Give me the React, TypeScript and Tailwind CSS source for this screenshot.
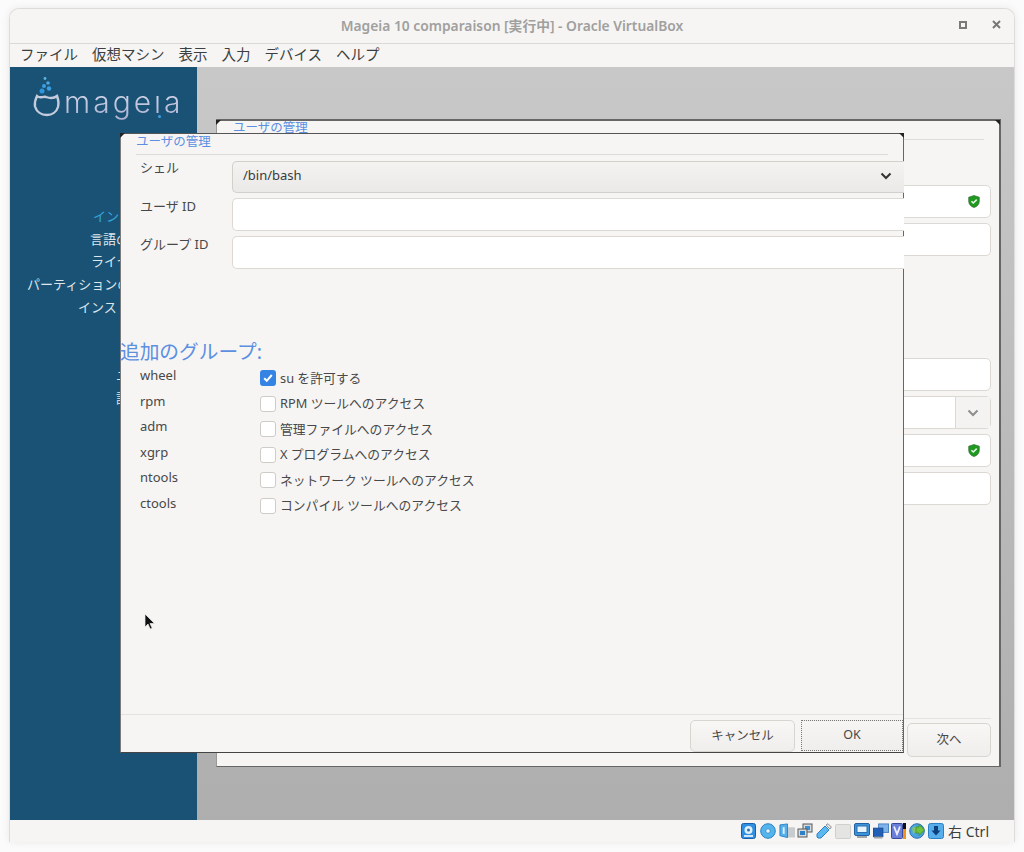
const jp = "font-['Noto_Sans','Noto_Sans_CJK_JP',sans-serif]";

const sideItems = [
  { text: 'インストール', cls: 'ml-[83px] text-[#35a6dc]' },
  { text: '言語の選択', cls: 'ml-[80px] text-[#dfe6ea]' },
  { text: 'ライセンス', cls: 'ml-[81px] text-[#dfe6ea]' },
  { text: 'パーティションの設定', cls: 'ml-[17px] text-[#dfe6ea]' },
  { text: 'インストール', cls: 'ml-[68px] text-[#dfe6ea]' },
  { text: '\u00a0', cls: '' },
  { text: '\u00a0', cls: '' },
  { text: 'ユーザ', cls: 'ml-[106px] text-[#dfe6ea]' },
  { text: '設定', cls: 'ml-[106px] text-[#dfe6ea]' },
];

const groups = [
  { name: 'wheel', label: 'su を許可する', checked: true },
  { name: 'rpm', label: 'RPM ツールへのアクセス' },
  { name: 'adm', label: '管理ファイルへのアクセス' },
  { name: 'xgrp', label: 'X プログラムへのアクセス' },
  { name: 'ntools', label: 'ネットワーク ツールへのアクセス' },
  { name: 'ctools', label: 'コンパイル ツールへのアクセス' },
];

function Shield() {
  return (
    <svg width="12" height="13" viewBox="0 0 12 13">
      <path d="M6 .5 11.300 2.200V6.400C11.300 9.400 9 11.600 6 12.600 3 11.600.7 9.400.7 6.400V2.200Z" fill="#1f9a1f" stroke="#2f5f2f" strokeWidth=".6" />
      <path d="M3.400 6.200 5.300 8 8.700 4.600" fill="none" stroke="#e8f8e8" strokeWidth="1.500" />
    </svg>
  );
}

function Chevron({ color }: { color: string }) {
  return (
    <svg width="12" height="8" viewBox="0 0 12 8">
      <path d="M1.500 1.500 6 6l4.500-4.500" fill="none" stroke={color} strokeWidth="2" />
    </svg>
  );
}

function Corner({ side }: { side: 'left' | 'right' }) {
  if (side === 'left') return <div className="absolute left-[-1px] top-[-1px] h-[5px] w-[5px] bg-[#222] [clip-path:polygon(0_0,100%_0,0_100%)]" />;
  return <div className="absolute right-[-1px] top-[-1px] h-[5px] w-[5px] bg-[#222] [clip-path:polygon(0_0,100%_0,100%_100%)]" />;
}

function Field({ children, className }: { children?: React.ReactNode; className?: string }) {
  return (
    <div className={`flex h-[33px] items-center justify-end rounded-[5px] border border-[#dcd8d4] bg-white pr-[10px] ${className ?? ''}`}>
      {children}
    </div>
  );
}

// Oracle VirtualBox status bar icons
function StatusIcons() {
  return (
    <div className="flex items-center gap-[2.800px]">
      <svg width="16" height="16" viewBox="0 0 16 16">
        <rect x=".5" y=".5" width="14" height="15" rx="2" fill="#2f8fe0" stroke="#1c5fa8" />
        <circle cx="7.500" cy="7" r="4" fill="#dff0fb" />
        <circle cx="7.500" cy="7" r="1.500" fill="#2f6fb0" />
        <rect x="3" y="12" width="9" height="2" fill="#cfe6f8" />
      </svg>
      <svg width="16" height="16" viewBox="0 0 16 16">
        <circle cx="8" cy="8" r="7.300" fill="#55b4ec" stroke="#2c80c4" />
        <circle cx="8" cy="8" r="2.200" fill="#e8f6fe" stroke="#2c80c4" strokeWidth=".7" />
      </svg>
      <svg width="16" height="16" viewBox="0 0 17 16">
        <rect x="9" y="4" width="8" height="11" rx="1" fill="#c9ccce" />
        <path d="M1 1.500 9 .5V15L1 13Z" fill="#56b0ea" stroke="#2c80c4" />
        <rect x="4" y="4" width="2" height="7" fill="#dff0fb" />
      </svg>
      <svg width="16" height="16" viewBox="0 0 16 16">
        <rect x="6" y="1" width="9" height="8" fill="#d7dadc" stroke="#55595c" />
        <rect x="8" y="3" width="5" height="4" fill="#3e8fd4" />
        <rect x="1" y="6" width="9" height="8" fill="#d7dadc" stroke="#55595c" />
        <rect x="3" y="8" width="5" height="4" fill="#2f7fc8" />
      </svg>
      <svg width="16" height="16" viewBox="0 0 16 16">
        <path d="M1 11 9 3l4 4-8 8H2L1 14Z" fill="#5cb8f0" stroke="#2c80c4" />
        <path d="M10 2l2-1.300L15.300 4 14 6Z" fill="#e5e8ea" stroke="#8a9094" />
      </svg>
      <svg width="16" height="16" viewBox="0 0 16 16">
        <rect x=".5" y="1.500" width="15" height="14" rx="1" fill="#e4e4e2" stroke="#cfcfcc" />
      </svg>
      <svg width="16" height="16" viewBox="0 0 16 16">
        <rect x=".5" y=".5" width="15" height="12" rx="1.500" fill="#3c93da" stroke="#24609f" />
        <rect x="3" y="3" width="10" height="6.500" fill="#e5f3fc" stroke="#2a6fb0" />
        <rect x="3" y="13" width="10" height="2" fill="#9fa6aa" />
      </svg>
      <svg width="16" height="16" viewBox="0 0 17 16">
        <rect x="6" y=".5" width="10.500" height="9" fill="#7fb4ea" stroke="#4a80c0" />
        <rect x=".5" y="5" width="10" height="9" fill="#1f5fb8" stroke="#1a4a90" />
        <rect x="1" y="14" width="9" height="2" fill="#9fa6aa" />
      </svg>
      <div className="flex">
        <svg width="12" height="16" viewBox="0 0 12 16">
          <rect x=".5" y=".5" width="11" height="15" rx="1" fill="#6a7fd8" stroke="#3a4a9a" />
          <path d="M3 3.500 6 11l3-7.500" fill="none" stroke="#eef" strokeWidth="1.800" />
        </svg>
        <div className="flex h-[16px] w-[3px] flex-col justify-end bg-[#111]">
          <div className="h-[10px] w-[3px] bg-[#f0921c]" />
        </div>
      </div>
      <svg width="16" height="16" viewBox="0 0 16 16">
        <circle cx="8" cy="8" r="7.300" fill="#4aa3e0" stroke="#2c70b0" />
        <path d="M3 5 7 3 8 8 4 11Z" fill="#7cc27a" />
        <path d="M7 4h3V1.500L15.500 7 10 12.500V10H7Z" fill="#6fc23c" stroke="#3d8a1e" strokeWidth=".7" />
      </svg>
      <svg width="16" height="16" viewBox="0 0 16 16">
        <rect x=".5" y=".5" width="15" height="15" rx="2" fill="#58aeea" stroke="#2c80c4" />
        <path d="M6 3h4v4.500h2.500L8 12.500 3.500 7.500H6Z" fill="#0f3f7a" />
      </svg>
    </div>
  );
}

export default function App() {
  return (
    <div className={`h-[852px] w-[1024px] overflow-hidden bg-[#fbfbfb] px-[9px] pb-[10px] pt-[8px] ${jp}`}>
      <div className="flex h-[834px] flex-col overflow-hidden rounded-t-[10px] border border-b-0 border-[#dedcda] bg-[#f6f5f4] shadow-[0_0_8px_rgba(0,0,0,0.08)]">
        {/* Title bar */}
        <div className="relative flex h-[35px] shrink-0 items-center justify-center border-b border-[#dbd9d7] bg-[#f6f5f4] pt-[1px]">
          <span className="text-[13.800px] font-semibold text-[#a0a09e]">Mageia 10 comparaison [実行中] - Oracle VirtualBox</span>
          <div className="absolute right-[13px] top-[11px] flex items-center gap-[25px]">
            <div className="h-[8px] w-[8px] border-2 border-[#7a7a7a]" />
            <svg width="9" height="9" viewBox="0 0 9 9">
              <path d="M1 1l7 7M8 1 1 8" stroke="#777" strokeWidth="2" />
            </svg>
          </div>
        </div>

        {/* Menu bar */}
        <div className="flex h-[23px] shrink-0 items-center gap-[14px] pb-[1px] pl-[10px] text-[14.500px] text-[#3a3f41]">
          <span>ファイル</span>
          <span>仮想マシン</span>
          <span>表示</span>
          <span>入力</span>
          <span>デバイス</span>
          <span>ヘルプ</span>
        </div>

        {/* Guest screen */}
        <div className="relative flex min-h-0 flex-1 bg-gradient-to-b from-[#c8c8c8] to-[#aeaeae]">
          <aside className="w-[187px] shrink-0 bg-[#1a5276]">
            <div className="flex h-[138px] items-start pl-[23px] pt-[9px]">
              <svg width="28" height="42" viewBox="0 0 28 42">
                <circle cx="12" cy="2.500" r="1.400" fill="#5fb4e6" />
                <circle cx="15" cy="7" r="1.800" fill="#4aa8e4" />
                <circle cx="11" cy="10" r="2" fill="#3a9fe2" />
                <circle cx="16" cy="12.500" r="2.200" fill="#3a9fe2" />
                <circle cx="9" cy="15" r="2.500" fill="#2f95dc" />
                <path d="M4 20C7 23 10 20 13 21 17 22.500 21 22.500 24 20 25.500 24 26 27 25 31 23.500 36 19 39 14 39 8 39 3.500 35.500 2 30.500 1.500 27 2.500 23 4 20Z" fill="none" stroke="#c4cbdc" strokeWidth="2.400" />
              </svg>
              <div className="relative ml-[3px] mt-[6px] bg-gradient-to-b from-[#e2e5f0] to-[#a9aecf] bg-clip-text font-['Inter',sans-serif] text-[30px] leading-[40px] font-light tracking-[3px] text-transparent">
                mageıa
                <div className="absolute left-[94px] top-[33px] h-[3px] w-[3px] rounded-full bg-[#3a9fe2]" />
              </div>
            </div>
            <ul className="w-[110px] overflow-hidden whitespace-nowrap text-[13px] leading-[22.700px]">
              {sideItems.map((item, i) => (
                <li key={i} className={item.cls}>{item.text}</li>
              ))}
            </ul>
          </aside>

          {/* Installer window behind */}
          <div className="absolute left-[206px] top-[52px] flex h-[648px] w-[785px] flex-col border-2 border-b border-l border-[#666] border-l-[#999] border-t-[#666] bg-[#f6f5f4]">
            <Corner side="left" />
            <Corner side="right" />
            <div className="ml-[16px] mr-[15px] h-[19px] border-b border-[#dedcda] text-[12.500px] leading-[14px] text-[#5c8fe0]">ユーザの管理</div>
            <div className="ml-[301px] mr-[8px] mt-[45px] flex flex-col">
              <Field><Shield /></Field>
              <Field className="mt-[5px]" />
              <Field className="mt-[102px]" />
              <div className="mt-[5px] flex h-[33px] rounded-[5px] border border-[#dcd8d4]">
                <div className="flex-1 rounded-l-[5px] bg-white" />
                <div className="flex w-[35px] items-center justify-center border-l border-[#dcd8d4] bg-[#f4f3f1]">
                  <Chevron color="#8d8d8d" />
                </div>
              </div>
              <Field className="mt-[5px]"><Shield /></Field>
              <Field className="mt-[5px]" />
            </div>
            <div className="mt-auto pb-[9px]">
              <div className="ml-[15px] mr-[8px] border-t border-[#e4e2e0]" />
              <div className="mr-[8px] mt-[4px] flex justify-end">
                <button className="h-[34px] w-[84px] rounded-[5px] border border-[#d8d4d0] bg-gradient-to-b from-[#f8f7f6] to-[#efeeec] text-[12.500px] text-[#484848]">次へ</button>
              </div>
            </div>
          </div>

          {/* User management dialog */}
          <div className="absolute left-[110px] top-[66px] flex h-[620px] w-[784px] flex-col border border-b-[#444] border-l-[#7a7a7a] border-r-[#666] border-t-[#555] bg-[#f6f5f4]">
            <Corner side="left" />
            <Corner side="right" />
            <div className="ml-[15px] mr-[15px] h-[21px] border-b border-[#dedcda] pt-[1px] text-[12.500px] leading-[14px] text-[#5c8fe0]">ユーザの管理</div>
            <div className="-mr-[1px] mt-[6px] flex flex-col gap-[5px] pl-[19px] text-[13px] text-[#484848]">
              <div className="flex">
                <span className="w-[92px] leading-[12px]">シェル</span>
                <div className="flex h-[32px] flex-1 items-center justify-between rounded-l-[5px] border border-r-0 border-[#d3cfcb] bg-gradient-to-b from-[#f4f3f1] to-[#ebe9e7] pb-[2px] pl-[10px] pr-[12px] text-[#3a3a3a]">
                  <span>/bin/bash</span>
                  <Chevron color="#333" />
                </div>
              </div>
              <div className="flex">
                <span className="w-[92px] leading-[16px]">ユーザ ID</span>
                <div className="h-[33px] flex-1 rounded-l-[5px] border border-r-0 border-[#dcd8d4] bg-white" />
              </div>
              <div className="flex">
                <span className="w-[92px] leading-[16px]">グループ ID</span>
                <div className="h-[33px] flex-1 rounded-l-[5px] border border-r-0 border-[#dcd8d4] bg-white" />
              </div>
            </div>
            <h2 className="-ml-[1px] mt-[70px] text-[19.700px] leading-[26px] font-normal whitespace-nowrap text-[#5c8fe0]">追加のグループ:</h2>
            <div className="mt-[3px] flex flex-col pl-[19px] text-[13px] text-[#484848]">
              {groups.map((g) => (
                <div key={g.name} className="flex h-[25.600px]">
                  <span className="w-[120px] leading-[14px]">{g.name}</span>
                  <div className="flex items-center gap-[4px] self-start pt-[2px]">
                    {g.checked ? (
                      <div className="flex h-[16px] w-[16px] items-center justify-center rounded-[3px] bg-[#3584e4]">
                        <svg width="12" height="12" viewBox="0 0 12 12">
                          <path d="M2.200 6.200 4.800 8.800 9.800 3" fill="none" stroke="#fff" strokeWidth="2" />
                        </svg>
                      </div>
                    ) : (
                      <div className="h-[16px] w-[16px] rounded-[3px] border border-[#cfcbc7] bg-white" />
                    )}
                    <span className="-mt-[1px] whitespace-nowrap text-[12.800px] leading-[16px]">{g.label}</span>
                  </div>
                </div>
              ))}
            </div>
            <div className="mt-auto border-t border-[#e4e2e0]">
              <div className="flex justify-end gap-[6px] pt-[5px]">
                <button className="h-[32px] w-[105px] rounded-[5px] border border-[#d8d4d0] bg-gradient-to-b from-[#f8f7f6] to-[#efeeec] text-[12.500px] text-[#484848]">キャンセル</button>
                <button className="h-[31px] w-[102px] border border-dotted border-[#777] bg-gradient-to-b from-[#f6f5f4] to-[#efeeec] text-[12.500px] text-[#484848]">OK</button>
              </div>
            </div>
          </div>

          {/* Mouse pointer */}
          <svg className="absolute left-[134px] top-[546px]" width="12" height="18" viewBox="0 0 12 18">
            <path d="M1 1v13l3-3 2.200 5 2-.8L6 10.500h4.500Z" fill="#111" stroke="#eee" strokeWidth=".7" />
          </svg>
        </div>

        {/* Status bar */}
        <div className="flex h-[22px] shrink-0 items-center justify-end gap-[4px] pr-[25px] text-[14px] text-[#3a3f41]">
          <StatusIcons />
          <span>右 Ctrl</span>
        </div>
      </div>
    </div>
  );
}
